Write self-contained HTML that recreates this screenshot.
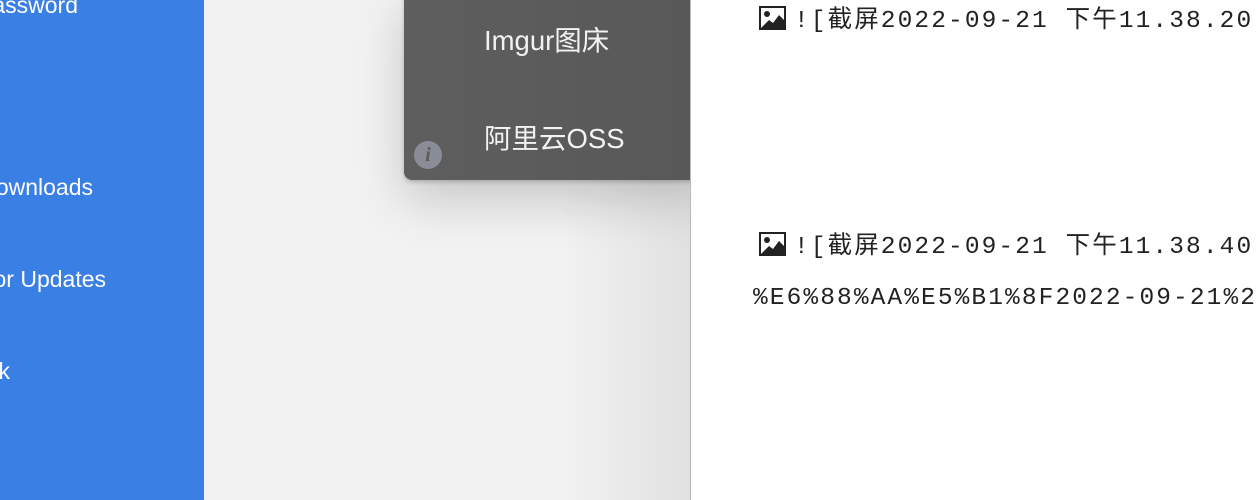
<!DOCTYPE html><html><head><meta charset="utf-8"><style>
body{margin:0;width:1258px;height:500px;overflow:hidden;position:relative;background:#f2f2f2;font-family:"Liberation Sans","Noto Sans CJK SC",sans-serif}
.sb{position:absolute;left:0;top:0;width:204px;height:500px;background:#3a7fe4;color:#fff;font-size:23px;overflow:hidden}
.sb span{position:absolute;white-space:nowrap;line-height:26px}
.pop{position:absolute;left:404px;top:-10px;width:300px;height:190px;background:linear-gradient(90deg,#5e5e5e,#585858);border-radius:0 0 0 8px;box-shadow:0 20px 50px rgba(0,0,0,.18),0 2px 4px rgba(0,0,0,.2)}
.pop span{position:absolute;left:80px;color:#f2f2f2;font-size:27.5px;line-height:30px;white-space:nowrap}
.info{position:absolute;left:10px;top:151px;width:28px;height:28px;border-radius:50%;background:#8a8d98;color:#5a5a5a;font:italic bold 20px "Liberation Serif",serif;text-align:center;line-height:28px}
.shade{position:absolute;left:560px;top:0;width:130px;height:500px;background:linear-gradient(90deg,rgba(0,0,0,0),rgba(0,0,0,.07))}
.right{position:absolute;left:690px;top:0;width:567px;height:500px;background:#fff;border-left:1px solid #b8b8b8;overflow:hidden}
.ln{position:absolute;white-space:nowrap;font-family:"Liberation Mono","Noto Sans CJK SC",monospace;font-size:24.5px;letter-spacing:2.1px;color:#222;line-height:30px}
.ic{display:inline-block;width:27px;height:24px;vertical-align:-3px;margin-right:8px}
</style></head><body>
<div class="shade"></div>
<div class="sb">
<span style="right:126px;top:-8px">Password</span>
<span style="right:111px;top:174px">Downloads</span>
<span style="right:98px;top:266px">Check for Updates</span>
<span style="right:194px;top:358px">Feedback</span>
</div>
<div class="pop">
<span style="top:36px">Imgur图床</span>
<span style="top:134px">阿里云OSS</span>
<div class="info">i</div>
</div>
<div class="right">
<div class="ln" style="left:68px;top:6px"><svg class="ic" viewBox="0 0 27 24"><rect x="1" y="1" width="25" height="22" fill="#fff" stroke="#222" stroke-width="2"/><circle cx="8" cy="8" r="3" fill="#222"/><path d="M2 22L10 14 14 17 20 9 26 15V23H2Z" fill="#222"/></svg>![截屏2022-09-21 下午11.38.20</div>
<div class="ln" style="left:68px;top:232px"><svg class="ic" viewBox="0 0 27 24"><rect x="1" y="1" width="25" height="22" fill="#fff" stroke="#222" stroke-width="2"/><circle cx="8" cy="8" r="3" fill="#222"/><path d="M2 22L10 14 14 17 20 9 26 15V23H2Z" fill="#222"/></svg>![截屏2022-09-21 下午11.38.40</div>
<div class="ln" style="left:62px;top:284px">%E6%88%AA%E5%B1%8F2022-09-21%20</div>
</div>
</body></html>
